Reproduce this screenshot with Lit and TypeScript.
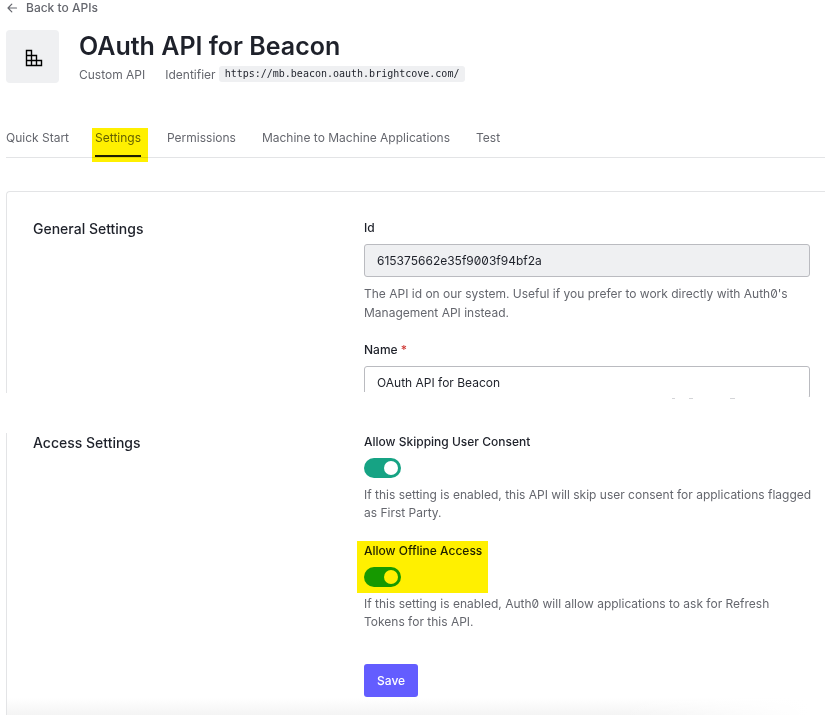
import { LitElement, html, css } from "lit";
import { customElement, property } from "lit/decorators.js";
import { classMap } from "lit/directives/class-map.js";

const shared = css`
  * {
    box-sizing: border-box;
  }
  .label {
    display: block;
    width: fit-content;
    font-size: 12px;
    line-height: 18px;
    font-weight: 500;
    color: #1e212a;
  }
  .help {
    margin: 0 -2px 0 0;
    font-size: 12px;
    line-height: 18px;
    color: #65676e;
  }
`;

@customElement("toggle-field")
class ToggleField extends LitElement {
  @property() label = "";
  @property() help = "";
  @property({ type: Boolean }) marked = false;

  static styles = [
    shared,
    css`
      :host {
        display: block;
      }
      .control {
        position: relative;
        width: fit-content;
        padding-bottom: 8px;
      }
      .marked::after {
        content: "";
        position: absolute;
        inset: -1px -6px 2px -7px;
        background: #fff000;
        mix-blend-mode: multiply;
        pointer-events: none;
      }
      .switch {
        appearance: none;
        display: flex;
        width: 37px;
        height: 20px;
        margin: 7px 0 0;
        padding: 3px;
        border-radius: 10px;
        background: #8a8d94;
        cursor: pointer;
      }
      .switch::before {
        content: "";
        width: 14px;
        height: 14px;
        border-radius: 50%;
        background: #fff;
      }
      .switch:checked {
        justify-content: flex-end;
        background: #16a384;
      }
    `,
  ];

  render() {
    return html`
      <div class=${classMap({ control: true, marked: this.marked })}>
        <label class="label" for="switch">${this.label}</label>
        <input class="switch" id="switch" type="checkbox" role="switch" checked />
      </div>
      <p class="help">${this.help}</p>
    `;
  }
}

@customElement("app-root")
class AppRoot extends LitElement {
  static styles = [
    shared,
    css`
      :host {
        display: flex;
        flex-direction: column;
        box-sizing: border-box;
        min-height: 100vh;
        padding-left: 6px;
        overflow: hidden;
        background: #fff;
        color: #1e212a;
        font-family: Inter, "Liberation Sans", sans-serif;
        font-feature-settings: "zero";
      }
      .back {
        display: flex;
        align-items: center;
        gap: 8px;
        width: fit-content;
        height: 15px;
        font-size: 12px;
        font-weight: 500;
        color: #65676e;
        text-decoration: none;
      }
      .header {
        display: flex;
        gap: 20px;
        margin-top: 15px;
      }
      .avatar {
        display: grid;
        place-items: center;
        width: 53px;
        height: 53px;
        padding: 3px 0 0 3px;
        border-radius: 4px;
        background: #eff0f2;
      }
      h1 {
        margin: 0;
        font-size: 25px;
        line-height: 32px;
        font-weight: 600;
      }
      .meta {
        display: flex;
        align-items: center;
        gap: 20px;
        height: 24px;
        font-size: 12px;
        color: #65676e;
      }
      .ident {
        display: flex;
        align-items: center;
        gap: 3px;
      }
      code {
        padding: 0 6px;
        border-radius: 3px;
        background: #eff0f2;
        color: #1e212a;
        font-family: "DejaVu Sans Mono", monospace;
        font-size: 10px;
        line-height: 16px;
      }
      .tabs {
        display: flex;
        gap: 26px;
        height: 40px;
        margin-top: 32px;
        border-bottom: 1px solid #e3e4e6;
      }
      .tab {
        position: relative;
        height: 39px;
        font-size: 12px;
        line-height: 40px;
        color: #65676e;
        text-decoration: none;
      }
      .current {
        border-bottom: 2px solid #1e212a;
      }
      .current::after {
        content: "";
        position: absolute;
        inset: 10px -7px -7px -3px;
        background: #fff000;
        mix-blend-mode: multiply;
        pointer-events: none;
      }
      .section {
        display: grid;
        grid-template-columns: 331fr 446fr;
        padding: 0 15px 0 26px;
        border-left: 1px solid #e3e4e6;
      }
      .general {
        height: 202px;
        margin-top: 33px;
        padding-top: 27px;
        border-top: 1px solid #e3e4e6;
        border-top-left-radius: 4px;
      }
      .access {
        flex: 1;
        margin-top: 40px;
        padding-bottom: 18px;
        background: linear-gradient(to right, transparent 75%, #fff 98%),
          linear-gradient(to top, #f4f4f4, #fff 17px);
      }
      h2 {
        margin: 0;
        font-size: 14px;
        line-height: 20px;
        font-weight: 500;
      }
      .field {
        margin-bottom: 19px;
      }
      .field .help {
        line-height: 19px;
      }
      .text {
        display: block;
        width: 100%;
        height: 33px;
        margin: 7px 0;
        padding: 0 12px;
        border: 1px solid #babbc0;
        border-radius: 3px;
        background: #fff;
        color: #1e212a;
        font: inherit;
        font-size: 12px;
      }
      .text:read-only {
        background: #eff0f2;
      }
      .cut {
        margin-bottom: 0;
        clip-path: polygon(0 0, 100% 0, 100% 31px, 90% 31px, 90% 26px, 0 26px);
      }
      .trace {
        display: block;
        margin: -1px 74px 0 auto;
      }
      .required {
        color: #d03c38;
      }
      toggle-field {
        margin-bottom: 20px;
      }
      .save {
        height: 33px;
        margin-top: 13px;
        padding: 0 13px;
        border: 0;
        border-radius: 3px;
        background: #635dff;
        color: #fff;
        font: inherit;
        font-size: 12px;
        font-weight: 500;
      }
    `,
  ];

  tabs = ["Quick Start", "Settings", "Permissions", "Machine to Machine Applications", "Test"];

  render() {
    return html`
      <a class="back" href="#apis">
        <svg width="12" height="12" viewBox="0 0 12 12" fill="none" stroke="currentColor" stroke-width="1.2" stroke-linecap="round" stroke-linejoin="round" aria-hidden="true">
          <path d="M10.5 6H2M5.8 2.2 2 6l3.8 3.8" />
        </svg>
        Back to APIs
      </a>
      <header class="header">
        <div class="avatar">
          <svg width="18" height="18" viewBox="0 0 18 18" fill="none" stroke="#000" stroke-width="1.4" aria-hidden="true">
            <path d="M1.5 1.5h5v15h-5zM1.5 6.5h10v10M1.5 11.5h15v5h-15z" />
          </svg>
        </div>
        <div>
          <h1>OAuth API for Beacon</h1>
          <div class="meta">
            <span>Custom API</span>
            <span class="ident">Identifier <code>https://mb.beacon.oauth.brightcove.com/</code></span>
          </div>
        </div>
      </header>
      <nav class="tabs">
        ${this.tabs.map(
          (name) => html`<a class=${classMap({ tab: true, current: name === "Settings" })} href="#tab">${name}</a>`
        )}
      </nav>
      <section class="section general">
        <h2>General Settings</h2>
        <div>
          <div class="field">
            <label class="label" for="api-id">Id</label>
            <input class="text" id="api-id" readonly value="615375662e35f9003f94bf2a" />
            <p class="help">
              The API id on our system. Useful if you prefer to work directly with Auth0's Management API instead.
            </p>
          </div>
          <label class="label" for="api-name">Name <span class="required">*</span></label>
          <input class="text cut" id="api-name" value="OAuth API for Beacon" />
          <svg class="trace" width="66" height="1" fill="#d4d5d8" aria-hidden="true">
            <path d="M2 0h3v1h-3zM19 0h4v1h-4zM60 0h5v1h-5z" />
          </svg>
        </div>
      </section>
      <section class="section access">
        <h2>Access Settings</h2>
        <div>
          <toggle-field
            label="Allow Skipping User Consent"
            help="If this setting is enabled, this API will skip user consent for applications flagged as First Party."
          ></toggle-field>
          <toggle-field
            marked
            label="Allow Offline Access"
            help="If this setting is enabled, Auth0 will allow applications to ask for Refresh Tokens for this API."
          ></toggle-field>
          <button class="save" type="button">Save</button>
        </div>
      </section>
    `;
  }
}
